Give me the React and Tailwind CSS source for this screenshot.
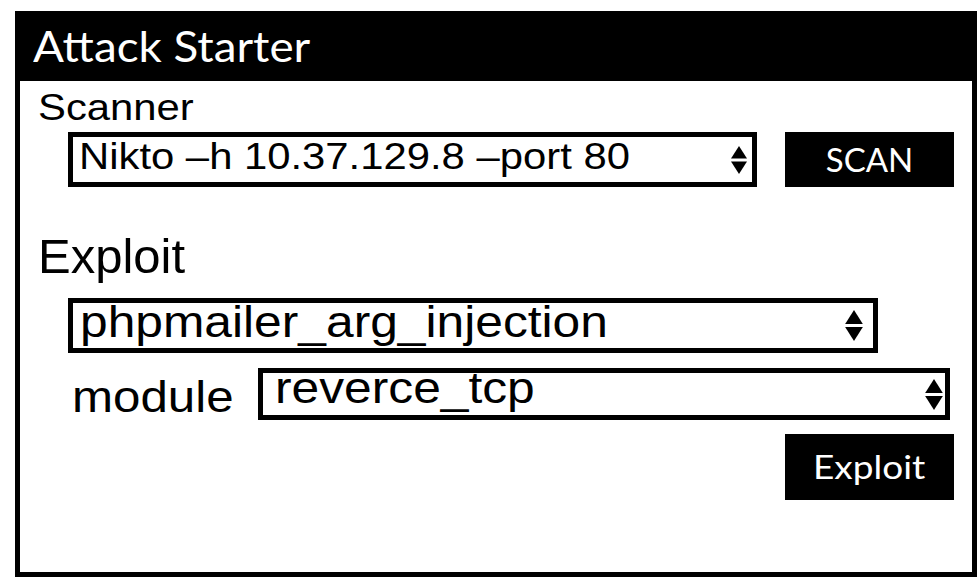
import { useState } from "react";

// Up/down spinner arrows drawn at the right of each select box
const Arrows = ({ className }) => (
  <svg viewBox="0 0 16 28" className={className} fill="black">
    <polygon points="8,0 16,12.6 0,12.6" />
    <polygon points="0,15.4 16,15.4 8,28" />
  </svg>
);

/**
 * SelectBox
 * A thick black framed "select" with a stretched Arial label and the spinner arrows.
 */
const SelectBox = ({ value, className, textClass, arrowClass }) => (
  <div className={`flex border-[5px] border-black bg-white ${className}`}>
    <div className="flex-1 min-w-0">
      <span
        className={`inline-block origin-left scale-x-[1.13] whitespace-nowrap text-black ${textClass}`}
        style={{ fontFamily: '"Liberation Sans", Arial, sans-serif' }}
      >
        {value}
      </span>
    </div>
    <div className="flex items-center">
      <Arrows className={arrowClass} />
    </div>
  </div>
);

export default function App() {
  const [scanner] = useState("Nikto \u2013h 10.37.129.8 \u2013port 80");
  const [exploit] = useState("phpmailer_arg_injection");
  const [module] = useState("reverce_tcp");

  const arial = { fontFamily: '"Liberation Sans", Arial, sans-serif' };
  const humanist = { fontFamily: 'Lato, "Open Sans", sans-serif' };

  return (
    <div className="w-[977px] h-[577px] bg-white pt-[11px] pl-[15px] overflow-hidden">
      <div className="w-[962px] h-[566px] flex flex-col border-x-[5px] border-b-[5px] border-black">
        {/* Title bar */}
        <div className="h-[70px] bg-black flex items-center pl-[13px]">
          <h1
            className="inline-block origin-left scale-x-[1.09] text-[42px] text-white"
            style={humanist}
          >
            Attack Starter
          </h1>
        </div>

        {/* Scanner */}
        <div className="mt-[8px] pl-[18px]">
          <span
            className="inline-block origin-left scale-x-[1.13] text-[37px] leading-[37px] text-black"
            style={arial}
          >
            Scanner
          </span>
        </div>
        <div className="mt-[6px] pl-[48px] flex gap-[28px]">
          <SelectBox
            value={scanner}
            className="w-[689px] h-[55px] pl-[6px] pr-[5px]"
            textClass="text-[37px] leading-[37px] pt-[1px]"
            arrowClass="w-[16px] h-[28px]"
          />
          <button
            className="w-[169px] h-[55px] bg-black text-white text-[33px] flex items-center justify-center"
            style={humanist}
          >
            SCAN
          </button>
        </div>

        {/* Exploit */}
        <div className="mt-[45px] pl-[18px]">
          <span className="text-[49px] leading-[49px] text-black" style={arial}>
            Exploit
          </span>
        </div>
        <div className="mt-[17px] pl-[48px]">
          <SelectBox
            value={exploit}
            className="w-[810px] h-[55px] pl-[7px] pr-[10px]"
            textClass="text-[44px] leading-[37px]"
            arrowClass="w-[18px] h-[31px]"
          />
        </div>
        <div className="mt-[15px] pl-[52px] flex">
          <div className="w-[186px] h-[52px] pt-[3px]">
            <span
              className="inline-block origin-left scale-x-[1.12] text-[44px] leading-[52px] text-black"
              style={arial}
            >
              module
            </span>
          </div>
          <SelectBox
            value={module}
            className="w-[692px] h-[52px] pl-[12px] pr-[2px]"
            textClass="text-[44px] leading-[30px]"
            arrowClass="w-[18px] h-[31px]"
          />
        </div>

        <div className="mt-[14px] pr-[18px] flex justify-end">
          <button
            className="w-[169px] h-[66px] bg-black text-white flex items-center justify-center"
            style={humanist}
          >
            <span className="inline-block scale-x-[1.12] text-[33px]">Exploit</span>
          </button>
        </div>
      </div>
    </div>
  );
}
